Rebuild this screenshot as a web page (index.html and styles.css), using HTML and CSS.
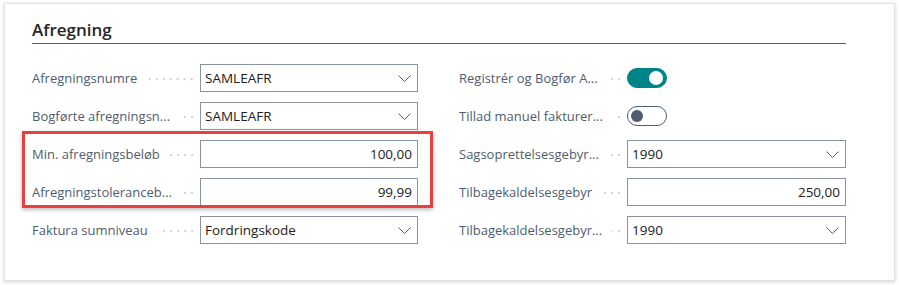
FILE: index.html
```html
<!DOCTYPE html>
<html>

	<head>
		<meta charset="UTF-8">
		<title>Afregning</title>
		<link rel="stylesheet" href="styles.css">
	</head>

	<body>
		<div class="card">
			<div class="content">
				<h2 class="title">Afregning</h2>
				<div class="cols">
					<div class="col">
						<div class="field">
							<div class="label"><span>Afregningsnumre</span><i class="dots"></i></div>
							<div class="input select">SAMLEAFR<svg class="chev" width="13" height="7" viewBox="0 0 13 7"><path d="M0.5 0.5 L6.5 6.5 L12.5 0.5" fill="none" stroke="#505c6d" stroke-width="1"/></svg></div>
						</div>
						<div class="field">
							<div class="label"><span>Bogførte afregningsn...</span><i class="dots"></i></div>
							<div class="input select">SAMLEAFR<svg class="chev" width="13" height="7" viewBox="0 0 13 7"><path d="M0.5 0.5 L6.5 6.5 L12.5 0.5" fill="none" stroke="#505c6d" stroke-width="1"/></svg></div>
						</div>
						<div class="highlight">
							<div class="field">
								<div class="label"><span>Min. afregningsbeløb</span><i class="dots"></i></div>
								<div class="input num">100,00</div>
							</div>
							<div class="field">
								<div class="label"><span>Afregningstoleranceb...</span><i class="dots"></i></div>
								<div class="input num">99,99</div>
							</div>
						</div>
						<div class="field">
							<div class="label"><span>Faktura sumniveau</span><i class="dots"></i></div>
							<div class="input select">Fordringskode<svg class="chev" width="13" height="7" viewBox="0 0 13 7"><path d="M0.5 0.5 L6.5 6.5 L12.5 0.5" fill="none" stroke="#505c6d" stroke-width="1"/></svg></div>
						</div>
					</div>
					<div class="col">
						<div class="field">
							<div class="label"><span>Registrér og Bogfør A...</span><i class="dots"></i></div>
							<div class="toggle-cell"><span class="toggle on"></span></div>
						</div>
						<div class="field">
							<div class="label"><span>Tillad manuel fakturer...</span><i class="dots"></i></div>
							<div class="toggle-cell"><span class="toggle"></span></div>
						</div>
						<div class="field">
							<div class="label"><span>Sagsoprettelsesgebyr...</span><i class="dots"></i></div>
							<div class="input select">1990<svg class="chev" width="13" height="7" viewBox="0 0 13 7"><path d="M0.5 0.5 L6.5 6.5 L12.5 0.5" fill="none" stroke="#505c6d" stroke-width="1"/></svg></div>
						</div>
						<div class="field">
							<div class="label"><span>Tilbagekaldelsesgebyr</span><i class="dots"></i></div>
							<div class="input num">250,00</div>
						</div>
						<div class="field">
							<div class="label"><span>Tilbagekaldelsesgebyr...</span><i class="dots"></i></div>
							<div class="input select">1990<svg class="chev" width="13" height="7" viewBox="0 0 13 7"><path d="M0.5 0.5 L6.5 6.5 L12.5 0.5" fill="none" stroke="#505c6d" stroke-width="1"/></svg></div>
						</div>
					</div>
				</div>
			</div>
		</div>
	</body>

</html>
```

FILE: styles.css
```css
* {
	margin: 0;
	padding: 0;
	box-sizing: border-box;
}

body {
	background: #fff;
	padding: 3px 4px;
	font-family: "Open Sans", "Noto Sans", sans-serif;
	font-size: 13px;
	color: #212121;
}

.card {
	width: 891px;
	height: 278px;
	border: 1px solid #e3e3e3;
	background: #fff;
	box-shadow: 0 1px 4px rgba(0, 0, 0, 0.18);
	padding: 14px 0 0 27px;
}

.content {
	width: 814px;
}

.title {
	font-size: 17px;
	font-weight: 600;
	line-height: 24px;
	color: #262626;
	padding-bottom: 1px;
	border-bottom: 1px solid #505c6d;
}

.cols {
	display: flex;
	gap: 41px;
	margin-top: 20px;
}

.col {
	flex: 1;
	display: flex;
	flex-direction: column;
	gap: 10px;
}

.col:first-child {
	flex: 0 0 386px;
}

.highlight {
	position: relative;
	display: flex;
	flex-direction: column;
	gap: 10px;
}

.highlight::after {
	content: "";
	position: absolute;
	top: -9px;
	left: -10px;
	right: -15px;
	bottom: -2px;
	border: 3px solid #e9403f;
	box-shadow: 0 2px 4px rgba(0, 0, 0, 0.25);
	pointer-events: none;
}

.field {
	display: flex;
	height: 28px;
}

.label {
	flex: 0 0 168px;
	display: flex;
	align-items: center;
	color: #505c6d;
	white-space: nowrap;
	overflow: hidden;
}

.dots {
	flex: 1;
	height: 2px;
	margin: 2px 7px 0 10px;
	background: linear-gradient(to right, transparent 5px, #d2d2d2 5px) right center / 7px 2px repeat-x;
}

.input {
	flex: 1;
	display: flex;
	align-items: center;
	border: 1px solid #8a93a3;
	padding: 0 5px 0 4px;
	font-size: 13.5px;
	color: #212121;
}

.select {
	justify-content: space-between;
}

.select .chev {
	margin-right: 1px;
}

.num {
	justify-content: flex-end;
}

.toggle-cell {
	flex: 1;
	display: flex;
	align-items: center;
}

.toggle {
	position: relative;
	width: 40px;
	height: 20px;
	border-radius: 10px;
	border: 1px solid #505c6d;
	background: #fff;
}

.toggle::after {
	content: "";
	position: absolute;
	top: 3px;
	left: 3px;
	width: 12px;
	height: 12px;
	border-radius: 50%;
	background: #505c6d;
}

.toggle.on {
	background: #008489;
	border-color: #008489;
}

.toggle.on::after {
	top: 2px;
	left: auto;
	right: 3px;
	width: 14px;
	height: 14px;
	background: #fff;
}
```
